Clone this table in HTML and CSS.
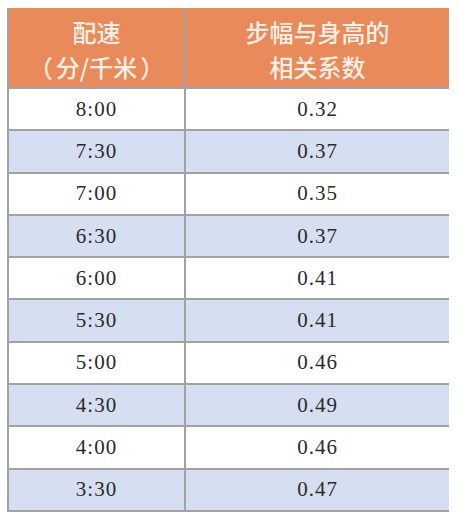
FILE: index.html
```html
<!DOCTYPE html>
<html lang="zh">
<head>
<meta charset="utf-8">
<link rel="stylesheet" href="styles.css">
</head>
<body>
<div class="table">
  <div class="head"><div class="head-text">配速<br><span class="paren">（</span>分/千米<span class="paren">）</span></div></div>
  <div class="head"><div class="head-text">步幅与身高的<br>相关系数</div></div>
  <div class="cell">8:00</div><div class="cell">0.32</div>
  <div class="cell alt">7:30</div><div class="cell alt">0.37</div>
  <div class="cell">7:00</div><div class="cell">0.35</div>
  <div class="cell alt">6:30</div><div class="cell alt">0.37</div>
  <div class="cell">6:00</div><div class="cell">0.41</div>
  <div class="cell alt">5:30</div><div class="cell alt">0.41</div>
  <div class="cell">5:00</div><div class="cell">0.46</div>
  <div class="cell alt">4:30</div><div class="cell alt">0.49</div>
  <div class="cell">4:00</div><div class="cell">0.46</div>
  <div class="cell alt">3:30</div><div class="cell alt">0.47</div>
</div>
</body>
</html>
```
FILE: styles.css
```css
html, body {
  margin: 0;
  padding: 0;
  background: #ffffff;
}
body {
  padding: 8px 0 0 7px;
}
.table {
  width: 442px;
  display: grid;
  grid-template-columns: 175px 263px;
  grid-template-rows: 79px repeat(10, 40.3px);
  column-gap: 2px;
  row-gap: 2px;
  background: #a2a2a2;
  border: 2px solid #a2a2a2;
  border-top: 0;
  box-sizing: border-box;
}
.head {
  background: #e98a5b;
  color: #fcefe6;
  font-family: "Noto Sans CJK SC", "Noto Sans", sans-serif;
  font-size: 24px;
  font-weight: 500;
  line-height: 35px;
  display: flex;
  align-items: center;
  justify-content: center;
  padding-top: 2px;
  box-sizing: border-box;
}
.head-text {
  text-align: center;
  white-space: nowrap;
}
.paren {
  margin: 0 3px;
}
.cell {
  background: #ffffff;
  color: #2b2b2b;
  font-family: "Liberation Serif", "Times New Roman", serif;
  font-size: 21px;
  letter-spacing: 1px;
  display: flex;
  align-items: center;
  justify-content: center;
}
.alt {
  background: #d5dff1;
}
```
